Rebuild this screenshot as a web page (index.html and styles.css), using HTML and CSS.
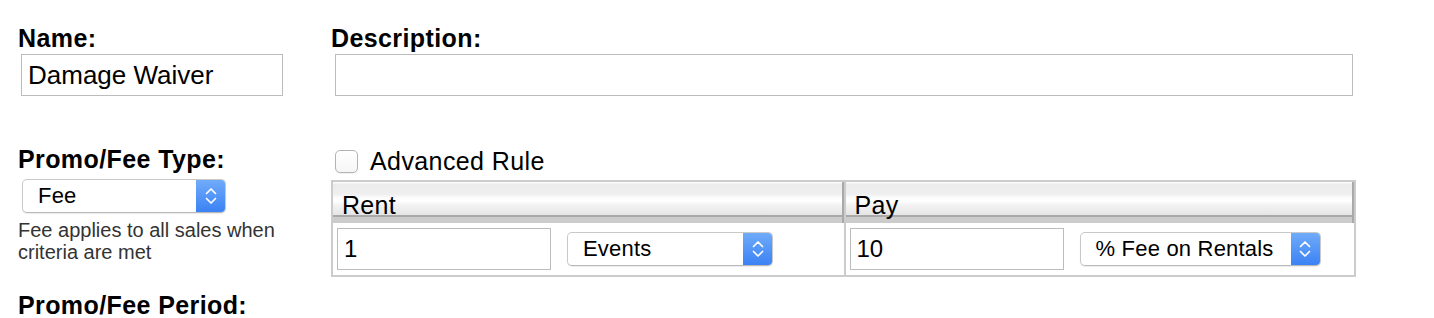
FILE: index.html
```html
<!DOCTYPE html>
<html lang="en">
<head>
  <meta charset="UTF-8" />
  <title>Promo/Fee</title>
  <link rel="stylesheet" href="styles.css">
</head>
<body>
  <div class="page">
    <!-- Name / Description -->
    <div class="row">
      <div class="field name-field">
        <label class="field-label">Name:</label>
        <input type="text" class="text-input name-input" value="Damage Waiver" />
      </div>
      <div class="field desc-field">
        <label class="field-label">Description:</label>
        <input type="text" class="text-input desc-input" />
      </div>
    </div>

    <!-- Type / Rule -->
    <div class="row rule-row">
      <div class="type-col">
        <label class="field-label">Promo/Fee Type:</label>
        <div class="select type-select">
          <span class="select-value">Fee</span>
          <span class="select-btn">
            <svg width="12" height="18" viewBox="0 0 12 18"><path d="M1.5 6.5 L6 2 L10.5 6.5 M1.5 11.5 L6 16 L10.5 11.5" fill="none" stroke="#fff" stroke-width="1.7" stroke-linecap="round" stroke-linejoin="round"/></svg>
          </span>
        </div>
        <p class="help">Fee applies to all sales when criteria are met</p>
      </div>

      <div class="rule-col">
        <label class="check-row">
          <input type="checkbox" class="checkbox" />
          Advanced Rule
        </label>
        <table class="rule-table">
          <tr>
            <th>Rent</th>
            <th class="second">Pay</th>
          </tr>
          <tr>
            <td>
              <div class="cell-row">
                <input type="text" class="text-input rule-input" value="1" />
                <div class="select events-select">
                  <span class="select-value">Events</span>
                  <span class="select-btn">
                    <svg width="12" height="18" viewBox="0 0 12 18"><path d="M1.5 6.5 L6 2 L10.5 6.5 M1.5 11.5 L6 16 L10.5 11.5" fill="none" stroke="#fff" stroke-width="1.7" stroke-linecap="round" stroke-linejoin="round"/></svg>
                  </span>
                </div>
              </div>
            </td>
            <td class="second">
              <div class="cell-row">
                <input type="text" class="text-input rule-input" value="10" />
                <div class="select fee-select">
                  <span class="select-value">% Fee on Rentals</span>
                  <span class="select-btn">
                    <svg width="12" height="18" viewBox="0 0 12 18"><path d="M1.5 6.5 L6 2 L10.5 6.5 M1.5 11.5 L6 16 L10.5 11.5" fill="none" stroke="#fff" stroke-width="1.7" stroke-linecap="round" stroke-linejoin="round"/></svg>
                  </span>
                </div>
              </div>
            </td>
          </tr>
        </table>
      </div>
    </div>

    <!-- Period -->
    <div class="field period-field">
      <label class="field-label">Promo/Fee Period:</label>
    </div>
  </div>
</body>
</html>
```

FILE: styles.css
```css
body {
  font-family: "Liberation Sans", Arial, sans-serif;
  background: #fff;
  color: #000;
  margin: 0;
  padding: 0;
}

.page {
  padding: 24px 0 0 18px;
}

.row {
  display: flex;
}

.field {
  display: flex;
  flex-direction: column;
}

.field-label {
  font-size: 25px;
  line-height: 28px;
  font-weight: bold;
  letter-spacing: 0.4px;
}

.name-field {
  width: 313px;
}

.text-input {
  box-sizing: border-box;
  height: 42px;
  border: 1px solid #bcbcbc;
  padding: 0 6px;
  font-family: "Liberation Sans", Arial, sans-serif;
  color: #000;
  background: #fff;
  outline: none;
}

.name-input {
  width: 262px;
  margin: 2px 0 0 3px;
  font-size: 26px;
}

.desc-input {
  width: 1018px;
  margin: 2px 0 0 4px;
  font-size: 26px;
}

/* type + rule */
.rule-row {
  margin-top: 49px;
}

.type-col {
  width: 313px;
  display: flex;
  flex-direction: column;
  align-items: flex-start;
}

.select {
  box-sizing: border-box;
  display: flex;
  align-items: center;
  height: 34px;
  background: #fff;
  border: 1px solid #c9c9c9;
  border-bottom-color: #b9b9b9;
  border-radius: 5px;
  box-shadow: 0 1px 1px rgba(0, 0, 0, 0.08);
  font-size: 22px;
  letter-spacing: 0.2px;
  overflow: hidden;
}

.select-value {
  flex: 1;
  padding-left: 15px;
  white-space: nowrap;
}

.select-btn {
  width: 29px;
  align-self: stretch;
  display: flex;
  align-items: center;
  justify-content: center;
  background: linear-gradient(#70abfa, #3b82f4);
}

.type-select {
  width: 204px;
  margin: 6px 0 0 4px;
}

.help {
  margin: 6px 0 0;
  width: 275px;
  font-size: 20px;
  line-height: 22px;
  color: #333;
}

.rule-col {
  display: flex;
  flex-direction: column;
}

.check-row {
  display: flex;
  align-items: center;
  height: 32px;
  font-size: 25px;
  letter-spacing: 0.4px;
  padding-left: 4px;
}

.checkbox {
  appearance: none;
  -webkit-appearance: none;
  box-sizing: border-box;
  width: 23px;
  height: 23px;
  margin: 0 12px 0 0;
  border: 1px solid #b3b3b3;
  border-radius: 5px;
  background: linear-gradient(#fff, #f6f6f6);
  box-shadow: 0 1px 1px rgba(0, 0, 0, 0.06);
}

.rule-table {
  margin-top: 3px;
  width: 1025px;
  table-layout: fixed;
  border-collapse: separate;
  border-spacing: 0;
  border: 2px solid #ccc;
}

.rule-table th {
  box-sizing: border-box;
  height: 41px;
  padding: 9px 8px 4px 9px;
  text-align: left;
  vertical-align: top;
  font-weight: normal;
  font-size: 25px;
  letter-spacing: 0.3px;
  line-height: 28px;
  border-right: 2px solid #a9a9a9;
  background: linear-gradient(to bottom,
    #fafafa 0, #fafafa 1px,
    #ececec 2px, #efefef 12px,
    #fdfdfd 16px, #ffffff 19px,
    #f3f3f3 23px, #e5e5e5 33px,
    #a9a9a9 33px, #a9a9a9 35px,
    #cccccc 35px, #cccccc 41px);
}

.rule-table th.second {
  border-left: 2px solid #ccc;
}

.rule-table td {
  padding: 5px 4px;
}

.rule-table td.second {
  border-left: 2px solid #ccc;
}

.cell-row {
  display: flex;
  align-items: center;
  gap: 16px;
}

.rule-input {
  width: 214px;
  font-size: 24px;
}

.events-select {
  width: 206px;
}

.fee-select {
  width: 241px;
}

.period-field {
  margin-top: 14px;
}
```
